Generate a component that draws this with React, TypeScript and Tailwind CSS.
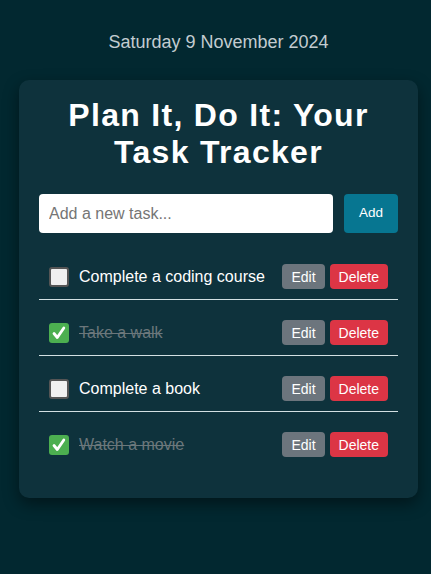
import { useState } from "react";

type Task = { id: number; text: string; done: boolean };

const initialTasks: Task[] = [
  { id: 1, text: "Complete a coding course", done: false },
  { id: 2, text: "Take a walk", done: true },
  { id: 3, text: "Complete a book", done: false },
  { id: 4, text: "Watch a movie", done: true },
];

function CheckBox({ checked, onClick }: { checked: boolean; onClick: () => void }) {
  if (checked) {
    return (
      <button
        onClick={onClick}
        className="w-5 h-5 shrink-0 rounded-[3px] bg-[#4caf50] flex items-center justify-center mr-[10px]"
      >
        <svg width="16" height="16" viewBox="0 0 16 16" fill="none">
          <path d="M3 8.5 L6.3 12.5 L12.8 3" stroke="white" strokeWidth="2.8" strokeLinecap="round" strokeLinejoin="round" />
        </svg>
      </button>
    );
  }
  return (
    <button
      onClick={onClick}
      className="w-5 h-5 shrink-0 rounded-[3px] bg-[#efefef] border-2 border-[#555] mr-[10px]"
    />
  );
}

export default function App() {
  const [tasks, setTasks] = useState<Task[]>(initialTasks);
  const [value, setValue] = useState("");

  const addTask = () => {
    if (!value.trim()) return;
    setTasks([...tasks, { id: Date.now(), text: value.trim(), done: false }]);
    setValue("");
  };

  return (
    <div className="min-h-[574px] bg-[#022830] font-['Liberation_Sans',Arial,sans-serif] pt-[32px] pl-[19px] pr-[13px] pb-10">
      <p className="text-center text-[18px] leading-[21px] text-[#c3ccd0] mb-[27px]">Saturday 9 November 2024</p>

      <div className="bg-[#0e323c] rounded-[10px] px-5 pt-[17px] pb-[21px] shadow-[0_6px_16px_rgba(0,0,0,0.45)]">
        <h1 className="text-white text-[32px] leading-[37px] font-bold text-center tracking-[1.3px] mb-[23px]">
          Plan It, Do It: Your Task Tracker
        </h1>

        <div className="flex gap-[11px] mb-[21px]">
          <input
            value={value}
            onChange={(e) => setValue(e.target.value)}
            placeholder="Add a new task..."
            className="flex-1 min-w-0 h-[39px] bg-white rounded-[4px] px-[10px] text-[16px] text-[#333] placeholder:text-[#757575] outline-none"
          />
          <button
            onClick={addTask}
            className="h-[39px] px-[15px] bg-[#077691] text-white text-[13.5px] rounded-[4px]"
          >
            Add
          </button>
        </div>

        <ul>
          {tasks.map((t, i) => (
            <li
              key={t.id}
              className={`flex items-center p-[10px] mb-[10px] ${i < tasks.length - 1 ? "border-b border-[#d3e0e3]" : ""}`}
            >
              <CheckBox
                checked={t.done}
                onClick={() => setTasks(tasks.map((x) => (x.id === t.id ? { ...x, done: !x.done } : x)))}
              />
              <span className={`flex-1 text-[16px] ${t.done ? "line-through text-[#6b777b]" : "text-white"}`}>
                {t.text}
              </span>
              <div className="flex gap-[5px]">
                <button className="h-[25px] bg-[#6c757d] text-white text-[14px] leading-4 px-[9px] rounded-[4px]">Edit</button>
                <button
                  onClick={() => setTasks(tasks.filter((x) => x.id !== t.id))}
                  className="h-[25px] bg-[#dc3545] text-white text-[14px] leading-4 px-[9px] rounded-[4px]"
                >
                  Delete
                </button>
              </div>
            </li>
          ))}
        </ul>
      </div>
    </div>
  );
}
